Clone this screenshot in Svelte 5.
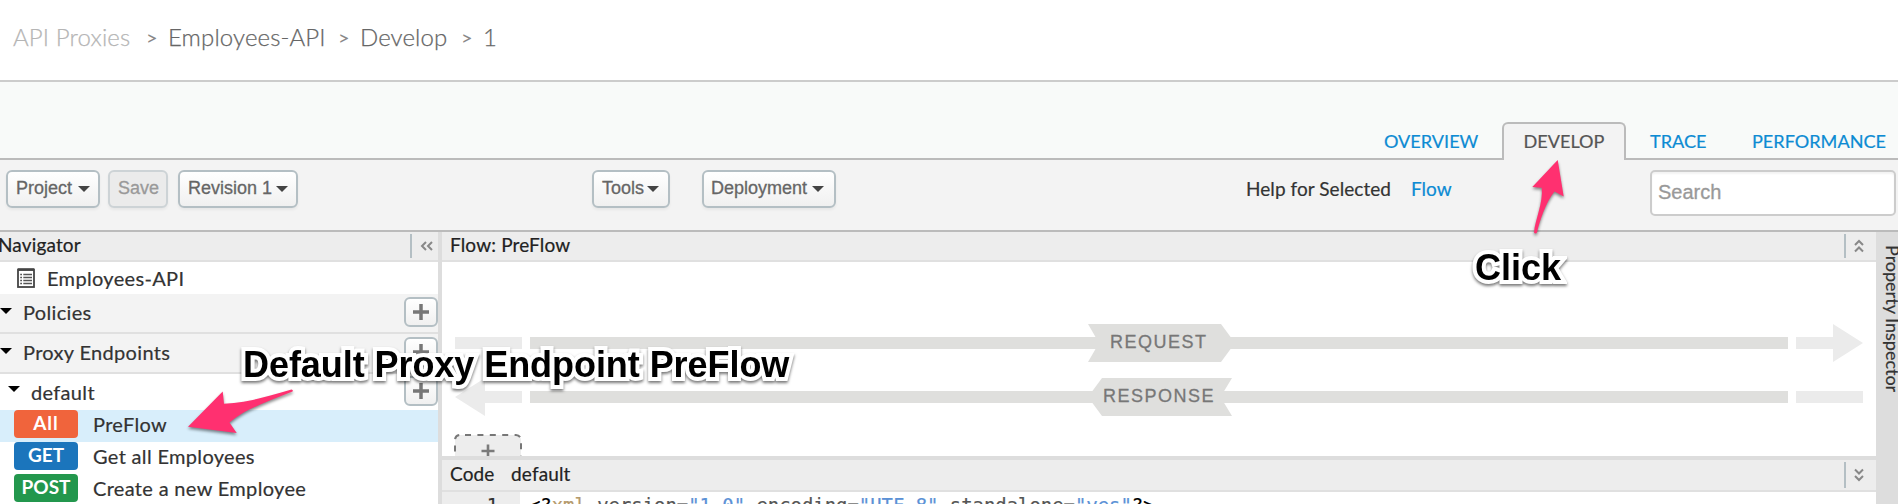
<script>
  const crumbs = [
    { label: 'API Proxies', cls: 'faded' },
    { label: 'Employees-API', cls: 'api' },
    { label: 'Develop', cls: 'dev' },
    { label: '1', cls: 'rev' }
  ];
  const flows = [
    { verb: 'All', name: 'PreFlow', kind: 'all', selected: true },
    { verb: 'GET', name: 'Get all Employees', kind: 'get' },
    { verb: 'POST', name: 'Create a new Employee', kind: 'post' }
  ];
</script>

{#snippet plus()}
  <button class="plus" aria-label="Add">
    <svg width="16" height="16" viewBox="0 0 16 16"><path d="M8 0V16M0 8H16" /></svg>
  </button>
{/snippet}

{#snippet menu(label, cls)}
  <button class="btn {cls}"><span>{label}</span><i class="caret"></i></button>
{/snippet}

<div class="page">
  <header>
    {#each crumbs as c, i}
      {#if i > 0}<span class="sep">&gt;</span>{/if}
      <span class="crumb {c.cls}">{c.label}</span>
    {/each}
  </header>

  <nav class="tabs">
    <a class="tab overview">OVERVIEW</a>
    <a class="tab active">DEVELOP</a>
    <a class="tab trace">TRACE</a>
    <a class="tab perf">PERFORMANCE</a>
  </nav>

  <div class="toolbar">
    {@render menu('Project', 'project')}
    <button class="btn save"><span>Save</span></button>
    {@render menu('Revision 1', 'revision')}
    {@render menu('Tools', 'tools')}
    {@render menu('Deployment', 'deployment')}
    <span class="help">Help for Selected</span>
    <a class="flowlink">Flow</a>
    <input placeholder="Search" />
  </div>

  <main>
    <aside>
      <div class="bar">
        <span class="title nav-title">Navigator</span>
        <div class="collapse left">
          <svg width="14" height="10" viewBox="0 0 14 10"><path d="M6 1L2 5L6 9M12 1L8 5L12 9" /></svg>
        </div>
      </div>
      <div class="root">
        <svg width="18" height="20" viewBox="0 0 18 20">
          <rect x="1" y="1.5" width="16" height="17.5" fill="#fff" stroke="#444" stroke-width="1.8" />
          <path d="M1 1.6H17" stroke="#444" stroke-width="2.6" />
          <path d="M3.2 6.5H5M3.2 9.5H5M3.2 12.5H5M3.2 15.5H5M6.3 6.5H15M6.3 9.5H15M6.3 12.5H15M6.3 15.5H15" stroke="#555" stroke-width="1.6" />
        </svg>
        <span>Employees-API</span>
      </div>
      <div class="group"><i class="tri"></i><span class="policies">Policies</span>{@render plus()}</div>
      <div class="group"><i class="tri"></i><span class="proxy">Proxy Endpoints</span>{@render plus()}</div>
      <div class="endpoint"><i class="tri"></i><span>default</span>{@render plus()}</div>
      {#each flows as f}
        <div class="flow" class:selected={f.selected}>
          <b class="badge {f.kind}">{f.verb}</b><span>{f.name}</span>
        </div>
      {/each}
    </aside>

    <section>
      <div class="bar">
        <span class="title flow-title">Flow: PreFlow</span>
        <div class="collapse">
          <svg width="10" height="14" viewBox="0 0 10 14"><path d="M1 6L5 2L9 6M1 12.5L5 8.5L9 12.5" /></svg>
        </div>
      </div>
      <svg class="diagram" width="1434" height="194" viewBox="442 262 1434 194">
        <g fill="#ebebeb">
          <path d="M455 337h67v12h-67zM1796 337h37v-13l30 19l-30 19v-13h-37z" />
          <path d="M1796 391h67v12h-67zM522 391h-37v-13l-30 19l30 19v-13h37z" />
        </g>
        <g fill="#dfdfdd">
          <path d="M530 337H1788v12H530zM530 391H1788v12H530z" />
          <path d="M1088 324H1221L1235 343L1221 362H1088L1099 343z" />
          <path d="M1102 378H1232L1220.500 397L1232 416H1102L1088 397z" />
        </g>
        <g class="phase">
          <text x="1110" y="348">REQUEST</text>
          <text x="1103" y="402">RESPONSE</text>
        </g>
        <rect x="455" y="435" width="66" height="50" rx="5" fill="#ededed" stroke="#777" stroke-width="2" stroke-dasharray="6 6.4" stroke-dashoffset="-5" />
        <path d="M488 444.500V458M481.500 451H494.500" stroke="#7b7b7b" stroke-width="2.600" />
      </svg>
      <div class="bar code-bar">
        <span class="title code-title">Code</span><span class="title file">default</span>
        <div class="collapse">
          <svg width="10" height="14" viewBox="0 0 10 14"><path d="M1 1.500L5 5.500L9 1.500M1 8L5 12L9 8" /></svg>
        </div>
      </div>
      <div class="editor">
        <span class="gutter">1</span>
        <code><b>&lt;?</b><em>xml</em> version=<q>"1.0"</q> encoding=<q>"UTF-8"</q> standalone=<q>"yes"</q><b>?&gt;</b></code>
      </div>
    </section>

    <div class="inspector"><span>Property Inspector</span></div>
  </main>

  <svg class="arrows" width="1898" height="504" viewBox="0 0 1898 504">
    <path d="M1557.700 160L1532.300 187L1541.700 187.700C1543.500 202 1535 220 1534 232.500Q1535.500 234.500 1537 232.500C1540 220 1546 202 1554.500 191.500L1563.700 196.500Z" />
    <path d="M188 426.700L222.700 391.500L224 403.700C248 403 268 396 291.500 389.500Q293.500 390 292.500 391.500C270 401 246 408 229.500 422.500L236.700 433Z" />
  </svg>
  <div class="note click">Click</div>
  <div class="note preflow">Default Proxy Endpoint PreFlow</div>
</div>

<style>
  :global(body) { margin: 0; overflow: hidden; }
  .page, .page * { box-sizing: border-box; }
  .page {
    position: relative; width: 1898px; height: 504px; overflow: hidden;
    background: #fff; color: #333; font: 20px/24px Lato, sans-serif;
  }
  header {
    height: 82px; border-bottom: 2px solid #ccc; padding: 0 0 7px 13px;
    display: flex; align-items: center; font-size: 24px; font-weight: 300; color: #666;
    -webkit-text-stroke: .25px;
  }
  .crumb { white-space: nowrap; letter-spacing: .12px; }
  .crumb.faded { color: #b5b5b5; width: 133px; }
  .crumb.api { width: 170px; }
  .crumb.dev { width: 101px; }
  .sep { width: 22px; font-size: 20px; color: #888; font-weight: 400; -webkit-text-stroke: 0; }

  .tabs {
    height: 78px; background: #f8faf9; box-shadow: inset 0 -2px #bbb;
    display: flex; align-items: flex-end; font-size: 18.100px; -webkit-text-stroke: .2px;
  }
  .tab { height: 38px; line-height: 38px; color: #0d8bd3; white-space: nowrap; }
  .overview { margin-left: 1384px; width: 118px; }
  .active {
    width: 124px; text-align: center; color: #555; background: #f3f3f3; line-height: 34px;
    border: 2px solid #bbb; border-bottom: 0; border-radius: 6px 6px 0 0;
  }
  .trace { margin-left: 24px; width: 102px; }

  .toolbar {
    height: 72px; background: #f3f3f3; border-bottom: 2px solid #bbb;
    display: flex; align-items: flex-start; padding-top: 10px;
  }
  button { padding: 0; margin: 0; }
  .btn {
    height: 38px; border: 2px solid #b4bfc4; border-radius: 6px; color: #666;
    background: linear-gradient(#fff, #f0f0f0); box-shadow: 0 2px 3px #0000000d;
    font: 18px/30px "Liberation Sans", Arial, sans-serif; -webkit-text-stroke: .3px;
    display: flex; align-items: center; padding: 0 0 3px 8px; white-space: nowrap;
  }
  .caret { border: 6px solid transparent; border-top-color: #444; border-bottom: 0; margin: 3px 0 0 6px; }
  .project { width: 94px; margin-left: 6px; }
  .save { width: 60px; margin-left: 8px; color: #999; background: #ebebeb; border-color: #cdd3d6; }
  .revision { width: 120px; margin-left: 10px; }
  .revision .caret { margin-left: 4px; }
  .tools { width: 78px; margin-left: 294px; }
  .tools .caret { margin-left: 3px; }
  .deployment { width: 134px; margin-left: 32px; padding-left: 7px; }
  .deployment .caret { margin-left: 5px; }
  .help { margin: 7px 0 0 410px; width: 165px; font-size: 19px; letter-spacing: .06px; white-space: nowrap; -webkit-text-stroke: .2px; }
  .flowlink { margin-top: 7px; width: 239px; font-size: 19px; color: #0d8bd3; -webkit-text-stroke: .2px; }
  input {
    width: 246px; height: 46px; border: 2px solid #ccc; border-radius: 5px; background: #fff;
    box-shadow: inset 0 2px 2px #0000000d; padding: 0 6px 2px; margin: 0;
    font: 20px "Liberation Sans", Arial, sans-serif; -webkit-text-stroke: .3px;
  }
  input::placeholder { color: #999; opacity: 1; }

  main { display: flex; height: 272px; -webkit-text-stroke: .2px; }
  aside { width: 442px; border-right: 4px solid #ddd; overflow: hidden; letter-spacing: .33px; }
  .bar {
    height: 30px; background: #ededed; border-bottom: 2px solid #e0e0e0;
    display: flex; align-items: center; color: #222;
  }
  .title { font-size: 19px; white-space: nowrap; letter-spacing: .15px; padding-bottom: 2px; }
  .nav-title { margin-left: -2px; }
  .flow-title { margin-left: 8px; }
  .collapse {
    margin-left: auto; width: 32px; height: 24px; border-left: 2px solid #b4bfc4;
    display: flex; align-items: center; padding-left: 8px;
  }
  .collapse.left { width: 28px; }
  .collapse svg { fill: none; stroke: #888; stroke-width: 2; }
  .root { height: 32px; display: flex; align-items: center; padding-left: 17px; gap: 12px; }
  .root span { padding-bottom: 1px; }
  .group, .endpoint { display: flex; align-items: center; height: 40px; background: #f3f3f3; border-bottom: 2px solid #e0e0e0; }
  .endpoint { height: 36px; background: #fff; border: 0; padding-left: 8px; }
  .tri { border: 6px solid transparent; border-top-color: #000; border-bottom: 0; width: 12px; margin-top: -4px; }
  .group span { margin: -3px 0 0 11px; }
  .endpoint span { margin: -1px 0 0 11px; }
  .endpoint .tri { margin-top: -6px; }
  .plus {
    margin-left: auto; width: 34px; height: 30px; border: 2px solid #b4bfc4; border-radius: 6px;
    background: linear-gradient(#fff, #f0f0f0); display: flex; align-items: center; justify-content: center;
  }
  .group .plus { margin-top: -2px; }
  .endpoint .plus { margin-top: -2px; }
  .plus path { stroke: #777; stroke-width: 3.500; fill: none; }
  .flow { height: 32px; display: flex; padding-left: 14px; gap: 15px; line-height: 28px; white-space: nowrap; }
  .selected { background: #d8eefb; }
  .badge { width: 64px; height: 28px; line-height: 26px; border-radius: 4px; color: #fff; text-align: center; font-size: 19px; letter-spacing: 0; -webkit-text-stroke: 0; }
  .all { background: #f0643c; letter-spacing: 1px; }
  .get { background: #1b75bc; }
  .post { background: #23974d; }

  section { width: 1434px; overflow: hidden; }
  .diagram { display: block; }
  .phase { font: 18px "Liberation Sans", Arial, sans-serif; letter-spacing: 1.500px; fill: #777; stroke: #777; stroke-width: .3px; -webkit-text-stroke: .3px #777; }
  .code-bar { height: 36px; border-top: 4px solid #ddd; }
  .code-title { margin-left: 8px; width: 61px; }
  .code-bar .collapse { height: 26px; }
  .editor { display: flex; height: 30px; font: 18.900px/27px "DejaVu Sans Mono", monospace; color: #555; white-space: pre; }
  .gutter { width: 78px; background: #ededed; text-align: right; padding-right: 22px; color: #333; }
  code { font: inherit; margin-left: 9px; }
  code b { font-weight: 400; color: #000; }
  code em { font-style: normal; color: #b59a6c; }
  q { quotes: none; color: #5b91d6; }

  .inspector { width: 22px; background: #ddd; padding: 13px 0 0; overflow: hidden; }
  .inspector span { display: block; writing-mode: vertical-rl; font-size: 18px; line-height: 26px; margin-left: 4px; white-space: nowrap; }

  .arrows { position: absolute; left: 0; top: 0; fill: #ff3070; filter: drop-shadow(0 2px 1.500px #0007); }
  .note {
    position: absolute; font: bold 36px/42px "Liberation Sans", Arial, sans-serif; color: #000; white-space: nowrap;
    -webkit-text-stroke: 8px #fff; paint-order: stroke fill; filter: drop-shadow(0 2px 1.500px #0008);
  }
  .click { left: 1475px; top: 247px; }
  .preflow { left: 243px; top: 344px; letter-spacing: -.06px; }
</style>
